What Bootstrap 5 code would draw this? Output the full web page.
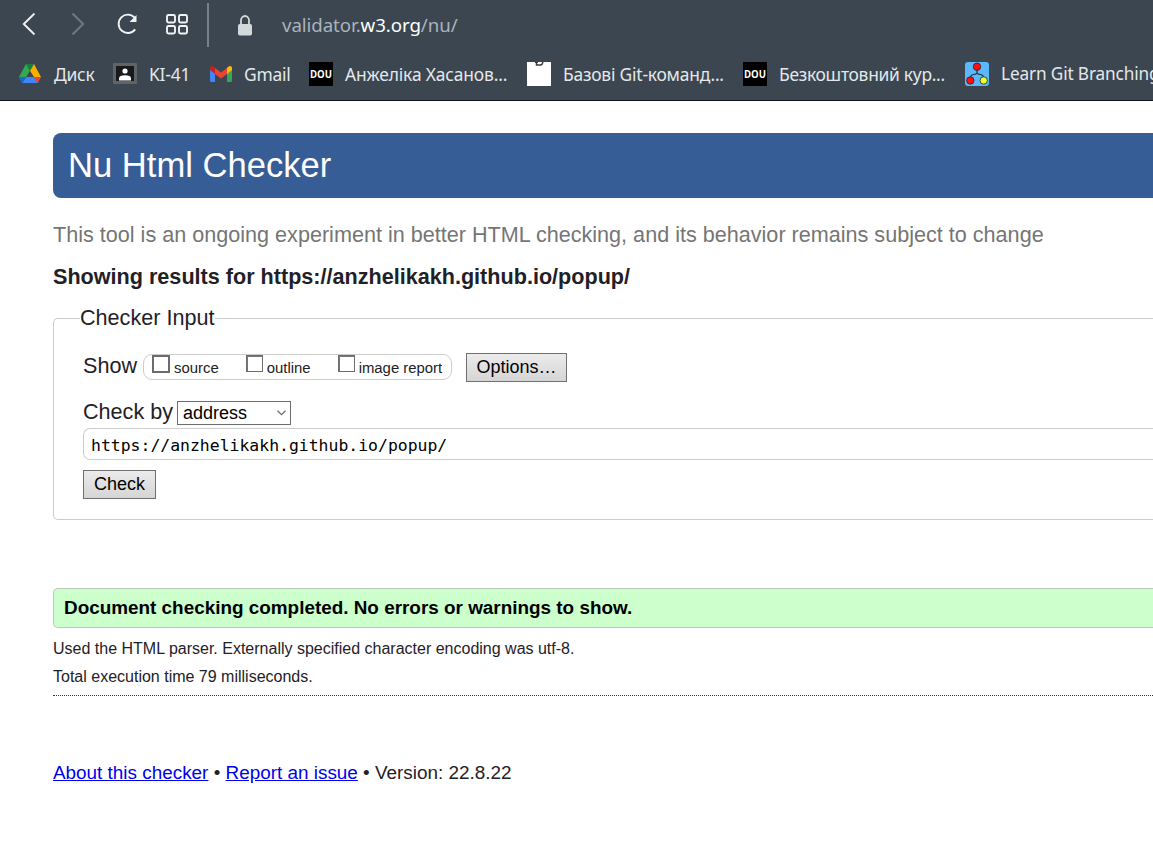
<!DOCTYPE html>
<html lang="en">
<head>
<meta charset="utf-8">
<meta name="viewport" content="width=device-width, initial-scale=1">
<title>Nu Html Checker</title>
<link href="https://cdn.jsdelivr.net/npm/bootstrap@5.3.0/dist/css/bootstrap.min.css" rel="stylesheet">
<style>
body{font-family:"Liberation Sans",Arial,sans-serif;color:#1f2126;background:#fff;overflow:hidden;height:854px}
.browser{background:#3b4650;border-bottom:1px solid #101418;height:101px;font-family:"Noto Sans","Open Sans",sans-serif;color:#e4e8ea}
.toolbar{height:48px;padding-left:17px}
.toolbar svg,.bookmark svg{display:block;flex:none}
.gap-fwd{margin-left:24px}
.gap-reload{margin-left:26px}
.gap-grid{margin-left:23px}
.tool-divider{width:2px;height:44px;background:#77818b;margin:2px 29px 0 17px}
.address{font-size:18.7px;line-height:26px;color:#a9b3bc;margin-left:30px;margin-top:2px;letter-spacing:-.08px}
.address span{color:#fff}
.bookmarks{height:52px;padding-left:18px}
.bookmark{height:52px;flex:none;white-space:nowrap;font-size:17.4px;line-height:26px;letter-spacing:-.2px}
.bookmark span{display:block;margin:-1px 0 0 12px}
.b1{width:95px}.b2{width:97px}.b3{width:99px}.b4{width:218px}.b5{width:216px}.b6{width:222px}
.b4{letter-spacing:-.13px}.b6{letter-spacing:-.27px}.b7{letter-spacing:-.13px;font-size:17.2px}
.page{margin-left:53px;padding-top:32px}
.banner{background:#365d95;color:#fff;height:65px;border-radius:8px 0 0 8px;padding-left:15px;font-size:34.6px;line-height:64px;font-weight:400;margin:0}
.tagline{color:#757575;font-size:21.6px;line-height:26px;margin-top:24px}
.results-title{font-size:21.6px;line-height:26px;font-weight:700;margin:16px 0 0}
.checker{border:1px solid #ccc;border-right:0;border-radius:5px 0 0 5px;margin-top:15px;height:215px;padding:0 0 0 29px;font-size:21.6px;line-height:26px}
.checker legend{float:none;width:auto;font-size:21.6px;line-height:26px;margin:0 0 0 -3px;padding:0 1px 0 0}
.show-row{margin-top:22px;height:30px}
.show-options{height:26px;width:309px;border:1px solid #ccc;border-radius:9px;margin:1px 14px 0 6px;font-size:14.9px;line-height:26px;padding-left:8px}
.tick{appearance:none;flex:none;width:17px;height:17px;border:1px solid #6c6c6c;box-shadow:inset 1px 1px #777;background:#fff;margin:0}
.tick-wide{width:18px;height:18px;border-width:2px;box-shadow:none}
.second{margin-left:27px}
.third{margin-left:27px}
.lab{margin-left:4px}
.plain-btn{height:29px;border:1px solid #707070;border-radius:0;padding:0 9.500px;font-size:18px;line-height:27px;color:#000;background:linear-gradient(#ebebeb,#d5d5d5)}
.by-row{margin-top:16px;height:29px}
.by-select{width:114px;height:24px;border:1px solid #6d6d6d;font-size:18px;line-height:22px;color:#000;padding:0 4px 0 5px;margin:2px 0 0 4px}
.url-box{height:32px;border:1px solid #ccc;border-right:0;border-radius:7px 0 0 7px;font-family:"DejaVu Sans Mono",monospace;font-size:16.45px;line-height:33px;color:#000;padding-left:7px}
.check-btn{margin-top:10px;padding:0 10px}
.verdict{height:40px;margin-top:68px;background:#cfc;border:1px solid #bcc8bc;border-right:0;border-radius:5px 0 0 5px;color:#000;font-size:18.9px;font-weight:700;line-height:37px;padding-left:10px}
.stats{font-size:16px;line-height:28px;padding-top:7px;height:68px;border-bottom:1px dotted #333}
.page-foot{font-size:18.9px;line-height:24px;margin-top:65px}
.page-foot a{color:#00e}
</style>
<script src="https://cdn.jsdelivr.net/npm/bootstrap@5.3.0/dist/js/bootstrap.bundle.min.js"></script>
</head>
<body>
<header class="browser overflow-hidden">
  <div class="toolbar d-flex align-items-center">
    <svg width="24" height="28" viewBox="0 0 24 28" fill="none" stroke="#f1f3f4" stroke-width="1.9"><path d="M17.500 3.500 6.800 14l10.700 10.500"/></svg>
    <svg class="gap-fwd" width="24" height="28" viewBox="0 0 24 28" fill="none" stroke="#6f7a83" stroke-width="1.9"><path d="M7.500 3.500 18.200 14 7.500 24.500"/></svg>
    <svg class="gap-reload" width="26" height="28" viewBox="0 0 26 28" fill="none" stroke="#f1f3f4" stroke-width="1.9"><path d="M20.200 19.400A9.200 9.200 0 1 1 19.700 7.700"/><path d="M21.500 5v7h-7z" fill="#f1f3f4" stroke="none"/></svg>
    <svg class="gap-grid" width="26" height="28" viewBox="0 0 26 28" fill="none" stroke="#f1f3f4" stroke-width="1.9"><rect x="3" y="5" width="8" height="7.500" rx="1.500"/><rect x="15" y="5" width="8" height="7.500" rx="1.500"/><rect x="3" y="16" width="8" height="7.500" rx="1.500"/><rect x="15" y="16" width="8" height="7.500" rx="1.500"/></svg>
    <div class="tool-divider"></div>
    <svg class="mt-1" width="14" height="22" viewBox="0 0 14 22"><path d="M3 10V5.500a4 4.500 0 0 1 8 0V10" fill="none" stroke="#d3d9db" stroke-width="1.8"/><rect y="9" width="14" height="11.500" rx="1.800" fill="#d3d9db"/></svg>
    <div class="address">validator.<span>w3.org</span>/nu/</div>
  </div>
  <nav class="bookmarks d-flex align-items-center">
    <div class="bookmark b1 d-flex align-items-center"><svg width="24" height="24" viewBox="0 0 24 24"><path fill="#188038" d="M8 2h8l-4 7z"/><path fill="#34a853" d="M8 2 1 15l3.500 6L12 9z"/><path fill="#fbad00" d="M16 2l7 13h-7L12 9z"/><path fill="#4285f4" d="M1 15h22l-3.500 6h-15z"/><path fill="#3b4650" d="m12 9 3.500 6h-7z"/><path fill="#ea4335" d="M16 15h7l-3.500 6z"/><path fill="#1967d2" d="M1 15h7.500L4.500 21z"/></svg><span>Диск</span></div>
    <div class="bookmark b2 d-flex align-items-center"><svg width="24" height="22" viewBox="0 0 24 22"><rect width="24" height="21" rx="1" fill="#5f6468"/><rect x="3" y="3" width="18" height="15" fill="#18191b"/><circle cx="12" cy="8" r="2.600" fill="#fff"/><path d="M6 17.500v-2q0-3.300 6-3.300t6 3.300v2z" fill="#fff"/></svg><span>KI-41</span></div>
    <div class="bookmark b3 d-flex align-items-center"><svg width="22" height="18" viewBox="0 0 22 18"><path fill="#4285f4" d="M0 4l5 3.700V17H1.500Q0 17 0 15.500z"/><path fill="#34a853" d="M17 7.700 22 4v11.500Q22 17 20.500 17H17z"/><path fill="#fbbc04" d="m17 3 1.600-1.400C20 .4 22 1.300 22 3v2l-5 4z"/><path fill="#ea4335" d="m5 3 6 4.500L17 3v6l-6 4.500L5 9z"/><path fill="#c5221f" d="M0 3c0-1.700 2-2.600 3.400-1.400L5 3v6L0 5z"/></svg><span>Gmail</span></div>
    <div class="bookmark b4 d-flex align-items-center"><svg width="24" height="24" viewBox="0 0 24 24"><rect width="24" height="24" fill="#000"/><text x="1" y="16" textLength="22" lengthAdjust="spacingAndGlyphs" font-family="Open Sans" font-weight="700" font-size="10.500" letter-spacing="0" fill="#fff">DOU</text></svg><span>Анжеліка Хасанов...</span></div>
    <div class="bookmark b5 d-flex align-items-center"><svg width="24" height="24" viewBox="0 0 24 24"><rect width="24" height="24" fill="#fff"/><path d="M8 .3h3M9.500 0v3h4q2 0 2.300-3" fill="none" stroke="#333c45" stroke-width="1.500"/></svg><span>Базові Git-команд...</span></div>
    <div class="bookmark b6 d-flex align-items-center"><svg width="24" height="24" viewBox="0 0 24 24"><rect width="24" height="24" fill="#000"/><text x="1" y="16" textLength="22" lengthAdjust="spacingAndGlyphs" font-family="Open Sans" font-weight="700" font-size="10.500" letter-spacing="0" fill="#fff">DOU</text></svg><span>Безкоштовний кур...</span></div>
    <div class="bookmark b7 d-flex align-items-center"><svg width="24" height="24" viewBox="0 0 24 24"><rect width="24" height="24" rx="3" fill="#5cb8fd"/><path d="M12 6v5.500M5.300 17q0-4 3-4.500 3.700-.4 3.700-1.500 0 1.100 3.700 1.500 3 .5 3 4.500" fill="none" stroke="#17334a" stroke-width="1.200"/><g stroke="#222" stroke-width=".8"><circle cx="12" cy="4.700" r="3.700" fill="#ff1010"/><circle cx="5.300" cy="18.500" r="3.700" fill="#ff1010"/><circle cx="18.700" cy="18.500" r="3.700" fill="#eaff2e"/></g></svg><span>Learn Git Branching</span></div>
  </nav>
</header>
<main class="page">
  <h1 class="banner">Nu Html Checker</h1>
  <p class="tagline mb-0">This tool is an ongoing experiment in better HTML checking, and its behavior remains subject to change</p>
  <h2 class="results-title">Showing results for https://anzhelikakh.github.io/popup/</h2>
  <fieldset class="checker">
    <legend>Checker Input</legend>
    <div class="show-row d-flex align-items-start">
      <span>Show</span>
      <div class="show-options d-flex">
        <label class="d-flex"><input type="checkbox" class="tick tick-wide"><span class="ms-1">source</span></label>
        <label class="d-flex second"><input type="checkbox" class="tick"><span class="lab">outline</span></label>
        <label class="d-flex third"><input type="checkbox" class="tick"><span class="lab">image report</span></label>
      </div>
      <button class="plain-btn" type="button">Options…</button>
    </div>
    <div class="by-row d-flex align-items-start">
      <span>Check by</span>
      <div class="by-select d-flex align-items-center justify-content-between"><span>address</span><svg width="9" height="6" viewBox="0 0 9 6" fill="none" stroke="#707070" stroke-width="1.300"><path d="m.5.7 4 4 4-4"/></svg></div>
    </div>
    <div class="url-box">https://anzhelikakh.github.io/popup/</div>
    <button class="plain-btn check-btn d-block" type="button">Check</button>
  </fieldset>
  <div class="verdict">Document checking completed. No errors or warnings to show.</div>
  <div class="stats"><div>Used the HTML parser. Externally specified character encoding was utf-8.</div><div>Total execution time 79 milliseconds.</div></div>
  <footer class="page-foot"><a href="#">About this checker</a> • <a href="#">Report an issue</a> • Version: 22.8.22</footer>
</main>
</body>
</html>
